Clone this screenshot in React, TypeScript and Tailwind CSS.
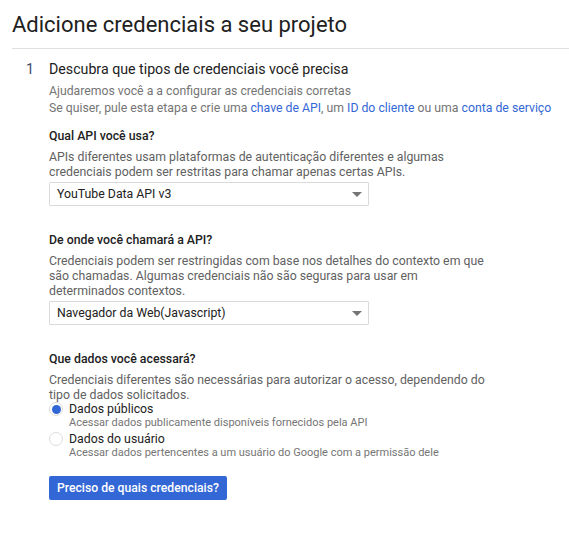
export default function App() {
  return (
    <div className="min-h-screen bg-white font-['Roboto',sans-serif] text-[#212121]">
      <h1 className="px-3 pt-[10px] pb-[8px] text-[22px] leading-[30px] font-normal">
        Adicione credenciais a seu projeto
      </h1>
      <div className="ml-3 border-t border-[#e0e0e0]" />

      <div className="flex pt-[10px]">
        <div className="w-[49px] pl-[26px] text-[14.2px] leading-[20px] text-[#3c4a66]">1</div>
        <div className="flex-1">
          <div className="text-[14.2px] leading-[20px]">Descubra que tipos de credenciais você precisa</div>

          <div className="mt-[4px] text-[12.25px] leading-[17px] text-[#757575]">
            <div>Ajudaremos você a a configurar as credenciais corretas</div>
            <div>
              Se quiser, pule esta etapa e crie uma <a className="text-[#3367d6]">chave de API</a>, um{" "}
              <a className="text-[#3367d6]">ID do cliente</a> ou uma{" "}
              <a className="text-[#3367d6]">conta de serviço</a>
            </div>
          </div>

          <Section
            title="Qual API você usa?"
            desc={
              <>
                APIs diferentes usam plataformas de autenticação diferentes e algumas
                <br />
                credenciais podem ser restritas para chamar apenas certas APIs.
              </>
            }
            className="mt-[11px]"
          >
            <Select value="YouTube Data API v3" />
          </Section>

          <Section
            title="De onde você chamará a API?"
            desc={
              <>
                Credenciais podem ser restringidas com base nos detalhes do contexto em que
                <br />
                são chamadas. Algumas credenciais não são seguras para usar em
                <br />
                determinados contextos.
              </>
            }
            className="mt-[26px]"
          >
            <Select value="Navegador da Web(Javascript)" />
          </Section>

          <Section
            title="Que dados você acessará?"
            desc={
              <>
                Credenciais diferentes são necessárias para autorizar o acesso, dependendo do
                <br />
                tipo de dados solicitados.
              </>
            }
            className="mt-[26px]"
          >
            <div className="-mt-[2px]">
              <Radio checked label="Dados públicos" sub="Acessar dados publicamente disponíveis fornecidos pela API" />
              <div className="mt-[3px]">
                <Radio label="Dados do usuário" sub="Acessar dados pertencentes a um usuário do Google com a permissão dele" />
              </div>
            </div>
          </Section>

          <button className="mt-[16px] h-[24px] rounded-[2px] bg-[#3367d6] px-[8px] text-[12.2px] font-medium leading-[24px] text-white">
            Preciso de quais credenciais?
          </button>
        </div>
      </div>
    </div>
  );
}

function Section({
  title,
  desc,
  children,
  className,
}: {
  title: string;
  desc: React.ReactNode;
  children: React.ReactNode;
  className?: string;
}) {
  return (
    <div className={className}>
      <div className="text-[12.3px] leading-[16px] font-medium text-[#212121]">{title}</div>
      <div className="mt-[6px] text-[12.3px] leading-[15px] text-[#616161]">{desc}</div>
      <div className="mt-[2px]">{children}</div>
    </div>
  );
}

function Select({ value }: { value: string }) {
  return (
    <div className="flex h-[24px] w-[320px] items-center justify-between rounded-[1px] border border-[#dadada] pl-[7px] pr-[6px] text-[12.3px] text-[#212121]">
      <span>{value}</span>
      <svg width="10" height="5" viewBox="0 0 10 5">
        <path d="M0 0 L10 0 L5 5 Z" fill="#757575" />
      </svg>
    </div>
  );
}

function Radio({ checked, label, sub }: { checked?: boolean; label: string; sub: string }) {
  return (
    <div className="flex">
      <div className="w-[20px] -mt-[1px]">
        <div
          className={
            checked
              ? "flex h-[14px] w-[14px] items-center justify-center rounded-full border border-[#dcdcdc]"
              : "h-[14px] w-[14px] rounded-full border border-[#dcdcdc]"
          }
        >
          {checked && <div className="h-[9px] w-[9px] rounded-full bg-[#3367d6]" />}
        </div>
      </div>
      <div>
        <div className="text-[12.3px] leading-[12px] text-[#212121]">{label}</div>
        <div className="text-[11px] leading-[15px] text-[#757575]">{sub}</div>
      </div>
    </div>
  );
}
